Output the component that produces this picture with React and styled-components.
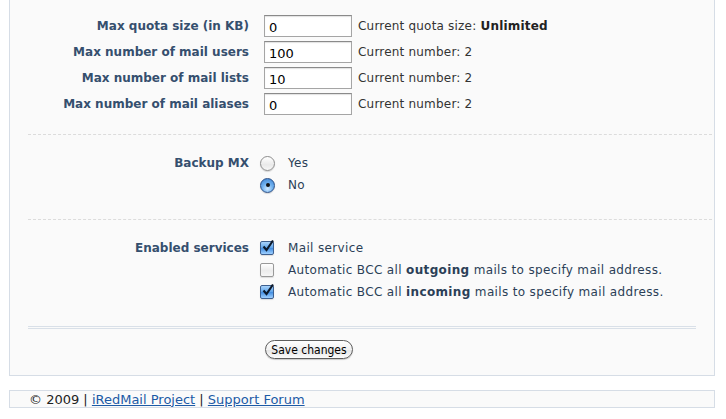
import React from "react";
import styled, { createGlobalStyle } from "styled-components";

const Global = createGlobalStyle`
  html, body { margin: 0; padding: 0; background: #ffffff; }
  body { font-family: "DejaVu Sans", Verdana, sans-serif; font-size: 12px; color: #333; }
`;

const Panel = styled.div`
  margin-left: 9px;
  width: 706px;
  box-sizing: border-box;
  background: #fafafa;
  border: 1px solid #d6dde6;
  border-top: none;
  padding: 0 2px 16px 18px;
`;

const Section = styled.div`
  padding: ${(p) => p.$pt}px 0 ${(p) => p.$pb}px 0;
  border-bottom: ${(p) => (p.$last ? "none" : "1px dashed #dcdcdc")};
`;

const Row = styled.div`
  display: grid;
  grid-template-columns: 221px 1fr;
  column-gap: 15px;
  align-items: ${(p) => (p.$top ? "start" : "center")};
  height: ${(p) => p.$h}px;
`;

const Label = styled.div`
  text-align: right;
  font-weight: bold;
  font-size: 12px;
  line-height: ${(p) => (p.$lh ? `${p.$lh}px` : "normal")};
  color: #354f6e;
  white-space: nowrap;
`;

const Field = styled.div`
  display: flex;
  align-items: center;
  gap: 6px;
  white-space: nowrap;
`;

const TextInput = styled.input`
  width: 88px;
  height: 22px;
  box-sizing: border-box;
  border: 1px solid #a5a5a5;
  border-top-color: #8a8a8a;
  box-shadow: inset 0 1px 1px rgba(0, 0, 0, 0.12);
  background: #fff;
  padding: 3px 4px 0 4px;
  font-family: "DejaVu Sans", Verdana, sans-serif;
  font-size: 13px;
  color: #000;
  margin: 0;
  outline: none;
`;

const Note = styled.span`
  color: #333;
  letter-spacing: 0.2px;
  b { color: #222; }
`;

const Choice = styled.label`
  display: flex;
  align-items: center;
  gap: ${(p) => p.$gap}px;
  color: #2b3f57;
  letter-spacing: 0.35px;
  white-space: nowrap;
  b { color: #2b3f57; }
`;

const RadioDot = styled.span`
  width: 15px;
  height: 15px;
  border-radius: 50%;
  box-sizing: border-box;
  display: inline-flex;
  align-items: center;
  justify-content: center;
  border: 1px solid ${(p) => (p.$on ? "#2b4f86" : "#8c8c8c")};
  background: ${(p) =>
    p.$on
      ? "radial-gradient(circle at 50% 75%, #cfe8ff 0%, #6fb0ee 45%, #3a7fd0 100%)"
      : "linear-gradient(#ffffff, #e9e9e9 60%, #f7f7f7)"};
  box-shadow: 0 1px 1px rgba(0, 0, 0, 0.15);
  &::after {
    content: "";
    display: ${(p) => (p.$on ? "block" : "none")};
    width: 4px;
    height: 4px;
    border-radius: 50%;
    background: #111;
  }
`;

const CheckBox = styled.span`
  width: 14px;
  height: 14px;
  box-sizing: border-box;
  border-radius: 2px;
  position: relative;
  display: inline-block;
  flex: none;
  border: 1px solid ${(p) => (p.$on ? "#3d5f8f" : "#999")};
  background: ${(p) =>
    p.$on
      ? "linear-gradient(#a9d3fb, #5ea4ea 50%, #3f8be0 51%, #9fd0ff)"
      : "linear-gradient(#ffffff, #ececec 55%, #f6f6f6)"};
  box-shadow: 0 1px 1px rgba(0, 0, 0, 0.12);
  svg { position: absolute; left: 0px; top: -3px; }
`;

const Stack = styled.div`
  display: flex;
  flex-direction: column;
  margin-left: -4px;
`;

const ChoiceRow = styled.div`
  height: 22px;
  display: flex;
  align-items: center;
`;

const DoubleRule = styled.div`
  height: 1px;
  border-top: 1px solid #d9e0e8;
  border-bottom: 1px solid #d9e0e8;
  width: 668px;
`;

const ButtonRow = styled.div`
  display: grid;
  grid-template-columns: 221px 1fr;
  column-gap: 15px;
  padding-top: 11px;
`;

const SaveButton = styled.button`
  grid-column: 2;
  justify-self: start;
  width: 88px;
  height: 19px;
  border-radius: 10px;
  border: 1px solid #5e5e5e;
  background: linear-gradient(#ffffff, #f1f1f1 50%, #e4e4e4 51%, #fbfbfb);
  box-shadow: 0 1px 1px rgba(0, 0, 0, 0.2);
  font-family: "Liberation Sans Narrow", "DejaVu Sans Condensed", sans-serif;
  font-size: 12px;
  color: #000;
  padding: 0;
  margin-left: 1px;
`;

const Footer = styled.div`
  margin: 14px 0 0 9px;
  width: 706px;
  box-sizing: border-box;
  height: 18px;
  border: 1px solid #d6dde6;
  background: #fafafa;
  display: flex;
  align-items: center;
  padding-left: 19px;
  font-size: 13px;
  color: #222;
  white-space: pre;
`;

const FooterLink = styled.a`
  color: #1c5aa6;
  text-decoration: underline;
`;

const Check = () => (
  <svg width="14" height="14" viewBox="0 0 14 14">
    <path d="M2.5 7.5 L5.5 11 L12 1.5" fill="none" stroke="#0d1a2c" strokeWidth="2.2" strokeLinejoin="miter" />
  </svg>
);

const quota = [
  { label: "Max quota size (in KB)", value: "0", note: <>Current quota size: <b>Unlimited</b></> },
  { label: "Max number of mail users", value: "100", note: "Current number: 2" },
  { label: "Max number of mail lists", value: "10", note: "Current number: 2" },
  { label: "Max number of mail aliases", value: "0", note: "Current number: 2" },
];

export default function App() {
  return (
    <>
      <Global />
      <Panel>
        <Section $pt={13} $pb={17}>
          {quota.map((q) => (
            <Row key={q.label} $h={26}>
              <Label>{q.label}</Label>
              <Field>
                <TextInput defaultValue={q.value} />
                <Note>{q.note}</Note>
              </Field>
            </Row>
          ))}
        </Section>
        <Section $pt={17} $pb={23}>
          <Row $h={44} $top>
            <Label $lh={22}>Backup MX</Label>
            <Stack>
              <ChoiceRow>
                <Choice $gap={13}><RadioDot /><span>Yes</span></Choice>
              </ChoiceRow>
              <ChoiceRow>
                <Choice $gap={13}><RadioDot $on /><span>No</span></Choice>
              </ChoiceRow>
            </Stack>
          </Row>
        </Section>
        <Section $pt={17} $pb={23} $last>
          <Row $h={66} $top>
            <Label $lh={22}>Enabled services</Label>
            <Stack>
              <ChoiceRow>
                <Choice $gap={14}><CheckBox $on><Check /></CheckBox><span>Mail service</span></Choice>
              </ChoiceRow>
              <ChoiceRow>
                <Choice $gap={14}><CheckBox /><span>Automatic BCC all <b>outgoing</b> mails to specify mail address.</span></Choice>
              </ChoiceRow>
              <ChoiceRow>
                <Choice $gap={14}><CheckBox $on><Check /></CheckBox><span>Automatic BCC all <b>incoming</b> mails to specify mail address.</span></Choice>
              </ChoiceRow>
            </Stack>
          </Row>
        </Section>
        <DoubleRule />
        <ButtonRow>
          <SaveButton>Save changes</SaveButton>
        </ButtonRow>
      </Panel>
      <Footer>
        {"© 2009 | "}<FooterLink href="#">iRedMail Project</FooterLink>{" | "}<FooterLink href="#">Support Forum</FooterLink>
      </Footer>
    </>
  );
}
